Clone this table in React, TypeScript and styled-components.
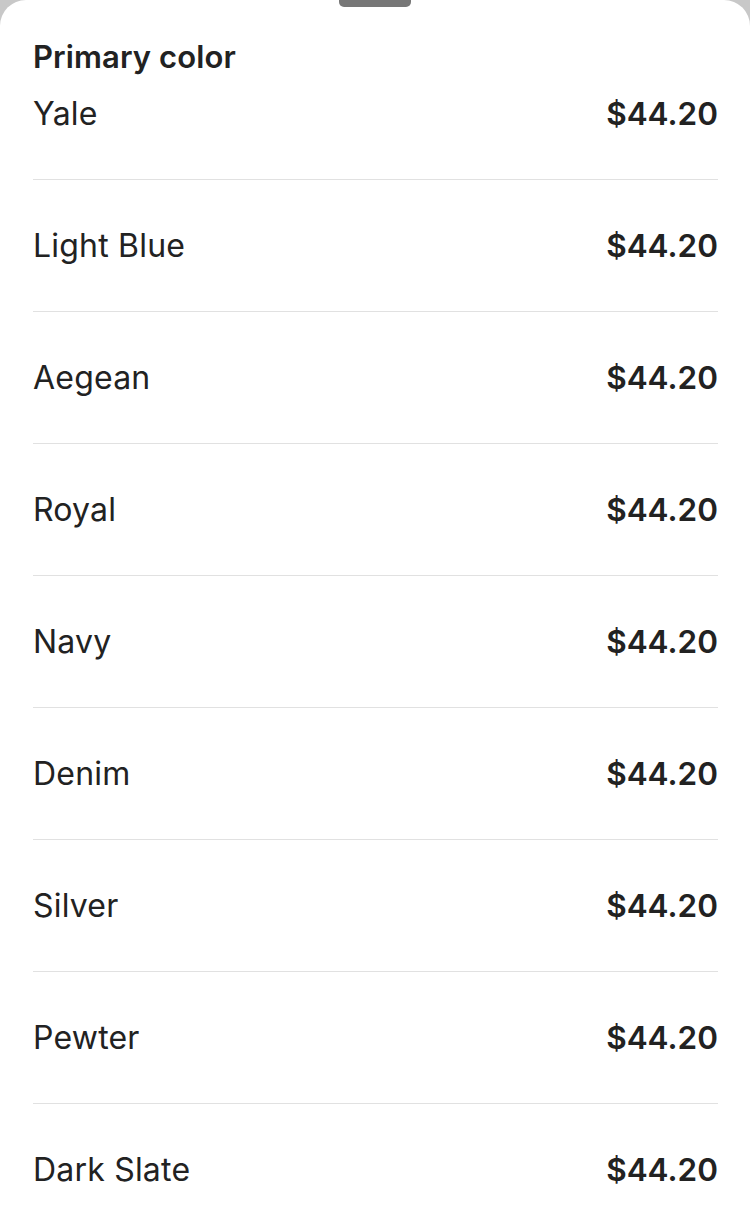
import React from "react";
import styled, { createGlobalStyle } from "styled-components";

const Global = createGlobalStyle`
  html, body { margin: 0; padding: 0; background: #c8c8c8; }
  body { font-family: Inter, "Noto Sans", Arial, sans-serif; color: #222222; }
  * { box-sizing: border-box; }
`;

const Sheet = styled.div`
  width: 750px;
  height: 1227px;
  background: #ffffff;
  border-radius: 26px 26px 0 0;
  overflow: hidden;
  display: flex;
  flex-direction: column;
  padding: 0 32px 0 33px;
`;

const HandleWrap = styled.div`
  display: flex;
  justify-content: center;
  height: 7px;
  padding-right: 1px;
`;

const Handle = styled.div`
  width: 72px;
  height: 7px;
  background: #777777;
  border-radius: 0 0 5px 5px;
`;

const Heading = styled.h2`
  margin: 34px 0 0;
  font-size: 31px;
  line-height: 32px;
  font-weight: 600;
  letter-spacing: 0.1px;
  color: #222222;
`;

const List = styled.ul`
  list-style: none;
  margin: 0;
  padding: 0;
`;

const Row = styled.li<{ $first?: boolean }>`
  display: flex;
  align-items: center;
  justify-content: space-between;
  height: ${(p) => (p.$first ? "106px" : "132px")};
  padding-bottom: ${(p) => (p.$first ? "26px" : "0")};
  border-top: ${(p) => (p.$first ? "none" : "1px solid #e1e1e1")};
`;

const Name = styled.span`
  font-size: 32px;
  font-weight: 400;
  letter-spacing: 0.2px;
  color: #222222;
`;

const Price = styled.span`
  font-size: 31.5px;
  font-weight: 600;
  color: #222222;
`;

const colors = [
  "Yale",
  "Light Blue",
  "Aegean",
  "Royal",
  "Navy",
  "Denim",
  "Silver",
  "Pewter",
  "Dark Slate",
];

export default function App() {
  return (
    <>
      <Global />
      <Sheet>
        <HandleWrap>
          <Handle />
        </HandleWrap>
        <Heading>Primary color</Heading>
        <List>
          {colors.map((c, i) => (
            <Row key={c} $first={i === 0}>
              <Name>{c}</Name>
              <Price>$44.20</Price>
            </Row>
          ))}
        </List>
      </Sheet>
    </>
  );
}
